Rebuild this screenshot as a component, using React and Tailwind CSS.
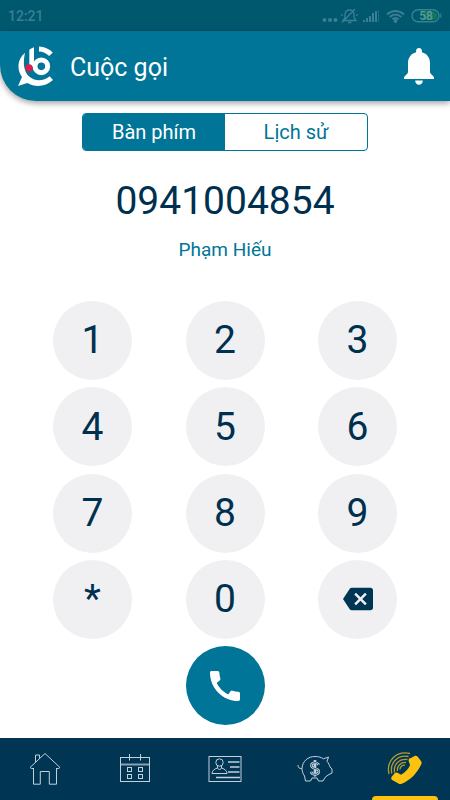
import React from "react";
import { MdBackspace, MdCall } from "react-icons/md";

const keys = ["1", "2", "3", "4", "5", "6", "7", "8", "9", "*", "0"];

const Logo = () => (
  <svg viewBox="0 3 150 150" className="size-[50px]" fill="none" aria-hidden="true">
    {/* vòng ngoài */}
    <path d="M87 27 A52 52 0 0 1 123 43" stroke="#fff" strokeWidth="15" />
    <path
      d="M45 38 C18 62 23 92 36 111 L24 138 L52 129 C78 144 108 139 129 120 L119 109 C99 126 72 124 56 108 C40 92 39 66 45 38 Z"
      fill="#fff"
    />
    {/* chữ b */}
    <path d="M58 29 Q65 24 72 22 V80 H58 Z" fill="#fff" />
    <circle cx="94" cy="79" r="19" stroke="#fff" strokeWidth="15" />
    <circle cx="57" cy="84" r="11" fill="#d81f4e" />
  </svg>
);

const Bell = () => (
  <svg viewBox="0 0 30 37" className="h-[37px] w-[30px]" fill="#fff" aria-hidden="true">
    <path d="M15 0c1.700 0 2.900 1.200 2.900 2.800v1.400C23 5.600 26 9.600 26 15v9c0 2.200 4 3.600 4 6v1H0v-1c0-2.400 4-3.800 4-6v-9C4 9.600 7 5.600 12.100 4.200V2.800C12.100 1.200 13.300 0 15 0z" />
    <path d="M11.200 32.600h7.600c0 2.400-1.600 4.200-3.800 4.200s-3.800-1.800-3.800-4.200z" />
  </svg>
);

const StatusIcons = () => (
  <svg viewBox="-1 0 122 18" className="h-[18px] w-[122px]" fill="none" stroke="#398092" aria-hidden="true">
    <g fill="#398092" stroke="none">
      <circle cx="3.500" cy="13" r="2" />
      <circle cx="9" cy="13" r="2" />
      <circle cx="14.500" cy="13" r="2" />
    </g>
    {/* chuông tắt tiếng */}
    <path d="M22 13.500h13l-2-3V8c0-3-1.800-5-4.500-5S24 5 24 8v2.500zM27 15.500h3.500M21 15.500L34 2M20 7.500l2 1M37 7.500l-2 1" strokeWidth="1.300" />
    {/* sóng di động */}
    <g fill="#398092" stroke="none">
      <rect x="42" y="13" width="2" height="2" />
      <rect x="45" y="11" width="2" height="4" />
      <rect x="48" y="9" width="2" height="6" />
      <rect x="51" y="6" width="2" height="9" />
      <rect x="54" y="4" width="2" height="11" />
      <rect x="57" y="3" width="1" height="12" opacity=".5" />
    </g>
    {/* wifi */}
    <g strokeWidth="1.800">
      <path d="M66 7.500c5-4.700 12-4.700 17 0M68.700 10c3.500-3 8.100-3 11.600 0M71.300 12.300c2-1.600 4.400-1.600 6.400 0" />
      <circle cx="74.500" cy="14" r="1" fill="#398092" />
    </g>
    {/* pin */}
    <rect x="91" y="2.700" width="27" height="12" rx="6" strokeWidth="1.400" />
    <path d="M102 4.400h10a4.300 4.300 0 0 1 0 8.600h-10z" fill="#0b7861" stroke="none" />
    <path d="M119.800 6.500v4.500" />
    <text x="105" y="13" textAnchor="middle" fontSize="12" fontWeight="500" fill="#5f9c98" stroke="none">
      58
    </text>
  </svg>
);

const HomeIcon = () => (
  <svg viewBox="0 0 34 36" className="h-9 w-[34px]" fill="none" stroke="currentColor" aria-hidden="true">
    <path d="M5.500 17.500v15.700h6.800V20.500h9v12.700h7.200V17.500M2 16.500L17 2.500l15 14-1.500 1H28M2 16.500l1.500 1H6M7.500 11V4h4v3.500" />
  </svg>
);

const CalendarIcon = () => (
  <svg viewBox="0 0 34 36" className="h-9 w-[34px]" fill="none" stroke="currentColor" aria-hidden="true">
    <rect x="2.500" y="6.500" width="29" height="24" />
    <path d="M11.500 3v6.500M22.500 3v6.500" />
    <path d="M2.500 13.500h29" strokeWidth="2" opacity=".7" />
    <rect x="9.500" y="16.500" width="4" height="4" />
    <rect x="20.500" y="16.500" width="4" height="4" />
    <rect x="9.500" y="23.500" width="4" height="4" />
    <rect x="20.500" y="23.500" width="4" height="4" />
  </svg>
);

const ContactIcon = () => (
  <svg viewBox="0 0 34 36" className="h-9 w-[34px]" fill="none" stroke="currentColor" aria-hidden="true">
    <rect x="1" y="5.500" width="32" height="25" />
    <circle cx="11.500" cy="11.500" r="3.700" />
    <path d="M9.500 15v2c-3.500 1-5.500 3-5.500 5.500h15c0-2.500-2-4.500-5.500-5.500v-2M9.500 17l2 2 2-2" />
    <path d="M20 11h11.500M22 16h9.500M20 21h11.500M8 26.500h24" strokeWidth="1.500" />
  </svg>
);

const PiggyIcon = () => (
  <svg viewBox="0 0 36 36" className="size-9" fill="none" stroke="currentColor" aria-hidden="true">
    <path d="M1 14c0 2.500 1.500 4 4 3.500C5.500 10 11 5.500 18 5.500c3.500 0 6 .8 8.500 2.300L31.500 6l-1.500 4.500c1.500 1.500 2.500 3.500 3 5.500l2 2v4l-4 2-3 2.500-2 3.500h-4.500l-1.500-3h-5l-1.500 3H8.500l-1-5C5.800 22.500 5 20 5 17.500" />
    <g strokeWidth="2.600">
      <path d="M21.700 14c-.6-1.600-1.700-2.300-3.700-2.300-2.300 0-3.600 1-3.600 2.800 0 4 7.400 2 7.400 6 0 2-1.700 2.800-3.800 2.800s-3.600-.8-4-2.500M18 9v16.500" />
      <path
        d="M21.700 14c-.6-1.600-1.700-2.300-3.700-2.300-2.300 0-3.600 1-3.600 2.800 0 4 7.400 2 7.400 6 0 2-1.700 2.800-3.800 2.800s-3.600-.8-4-2.500"
        stroke="#003554"
        strokeWidth=".8"
      />
    </g>
  </svg>
);

const CallIcon = () => (
  <svg viewBox="0 0 36 36" className="size-9" fill="none" aria-hidden="true">
    <g stroke="#b39a31" strokeWidth="1.300">
      <path d="M2 23C-1 10 9-.5 23 2.500" />
      <path d="M4.800 22.500C2.500 12 10.500 3.500 21.500 5.500" />
      <path d="M7.600 21.500C6 13.500 12 7.500 20.500 8.500" />
      <path d="M10.400 20c-.7-5 3.400-9 8.600-8.500" />
      <path d="M13 18.500c0-2.500 2-4.500 5-4.300" />
    </g>
    <path
      d="M23.500 7.200l4-2.200c1-.6 2.200-.4 3 .5l3.500 4.500c.8 1 .8 2.200.3 3.300-4.300 9-10.500 15.500-19.500 19.500-1.200.5-2.400.4-3.300-.4L5.200 29c-1.200-.9-1.300-2-.5-3.200l2.700-3.400c.8-1 2-1.300 3-.6l3.700 2c4.200-2.400 7.200-5.600 9-9.800l-1.300-3.600c-.4-1.300-.2-2.400.7-3.200z"
      fill="#fdc20f"
    />
  </svg>
);

const navItems = [
  { label: "Trang chủ", icon: HomeIcon },
  { label: "Lịch", icon: CalendarIcon },
  { label: "Danh bạ", icon: ContactIcon },
  { label: "Tài chính", icon: PiggyIcon },
  { label: "Cuộc gọi", icon: CallIcon, active: true },
];

const App = () => {
  return (
    <div className="flex min-h-screen flex-col bg-white font-['Roboto',sans-serif] text-[#003050]">
      {/* Thanh trạng thái */}
      <div className="flex h-[31px] items-center justify-between bg-[#00586f] px-2 text-sm font-medium text-[#398092]">
        <span>12:21</span>
        <StatusIcons />
      </div>

      <header className="flex h-[70px] items-center rounded-bl-[36px] bg-[#007597] pr-4 pl-[10px] shadow-[0_2px_6px_rgba(0,0,0,0.4)]">
        <Logo />
        <h1 className="ml-[10px] flex-1 pt-[3px] text-[25px] text-white">Cuộc gọi</h1>
        <button aria-label="Thông báo">
          <Bell />
        </button>
      </header>

      <main className="flex flex-1 flex-col items-center pt-3 pb-[13px]">
        <div className="grid h-[38px] w-[286px] grid-cols-2 overflow-hidden rounded border border-[#007597] text-[20px]">
          <button className="bg-[#007597] text-white">Bàn phím</button>
          <button className="text-[#007597]">Lịch sử</button>
        </div>
        <p className="mt-[26px] text-[39px] leading-[48px]">0941004854</p>
        <p className="mt-[13px] text-[19px] leading-6 text-[#007597]">Phạm Hiếu</p>

        {/* Bàn phím số */}
        <div className="mt-[39px] grid w-full flex-1 grid-cols-[repeat(3,79px)] content-between justify-between px-[53px] text-[39px]">
          {keys.map((key) => (
            <button key={key} className="size-[79px] rounded-full bg-[#f0f0f2]">
              {key}
            </button>
          ))}
          <button
            aria-label="Xóa"
            className="flex size-[79px] items-center justify-center rounded-full bg-[#f0f0f2] text-[#003554]"
          >
            <MdBackspace size={30} />
          </button>
          <button
            aria-label="Gọi"
            className="col-start-2 flex size-[79px] items-center justify-center rounded-full bg-[#007597] text-white"
          >
            <MdCall size={40} />
          </button>
        </div>
      </main>

      <nav className="grid h-[62px] grid-cols-5 bg-[#003554] text-[#c3d0da]">
        {navItems.map((item) => (
          <a
            key={item.label}
            href="#"
            aria-label={item.label}
            className="relative flex items-center justify-center"
          >
            <item.icon />
            {item.active && (
              <span className="absolute inset-x-3 bottom-0 h-1 rounded-t bg-[#fdc20f]" />
            )}
          </a>
        ))}
      </nav>
    </div>
  );
};

export default App;
